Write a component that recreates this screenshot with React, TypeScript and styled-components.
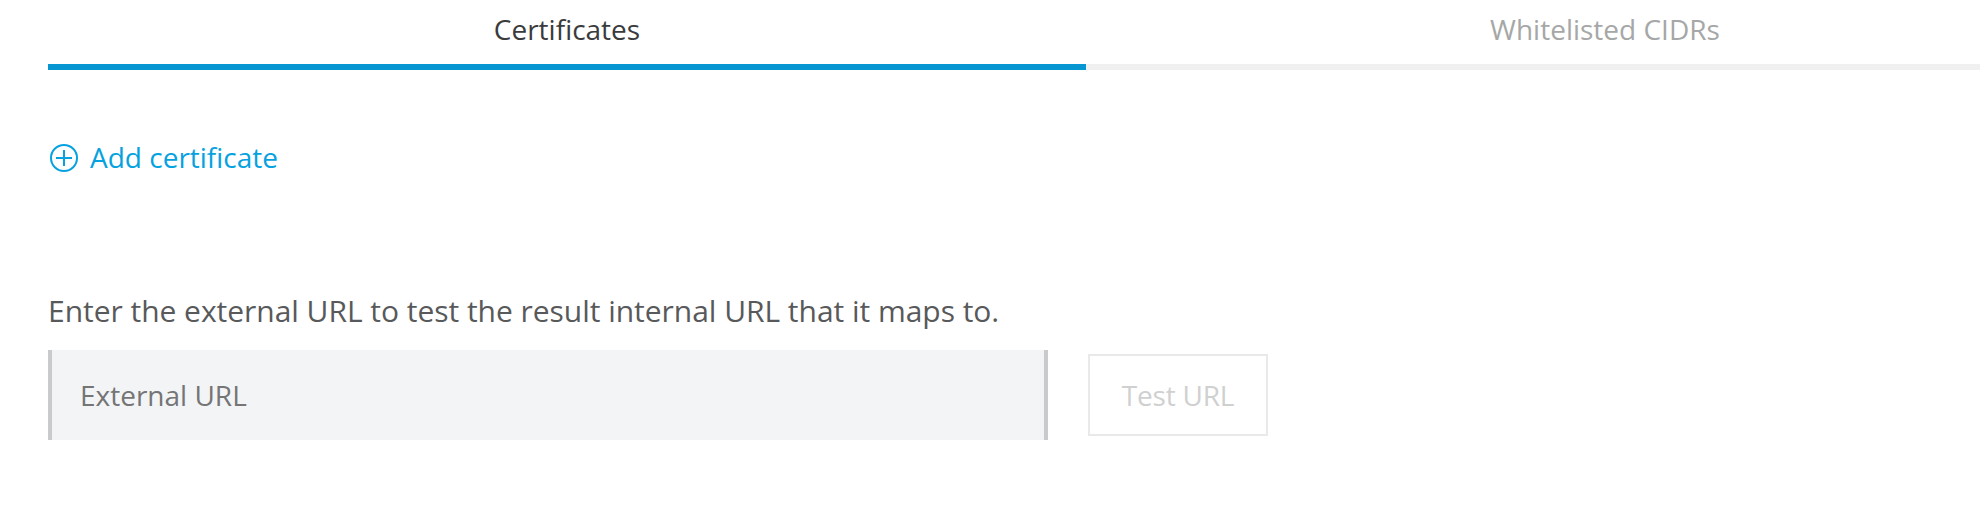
import React from 'react';
import styled, { createGlobalStyle } from 'styled-components';

const GlobalStyle = createGlobalStyle`
  * { box-sizing: border-box; }
  html, body { margin: 0; background: #fff; overflow: hidden; }
  body { font-family: "Open Sans", sans-serif; }
`;

const Page = styled.main`
  width: 1980px;
  height: 526px;
  padding-left: 48px;
  overflow: hidden;
`;

const Tabs = styled.nav`
  display: flex;
  width: 2076px;
`;

const Tab = styled.button<{ $active?: boolean }>`
  flex: 0 0 1038px;
  height: 70px;
  padding: 0 0 5px;
  border: 0;
  border-bottom: 6px solid ${(p) => (p.$active ? '#0696d1' : '#f0f0f0')};
  background: none;
  color: ${(p) => (p.$active ? '#3a3b3c' : '#a6a7a7')};
  font: 400 28px/59px "Open Sans", sans-serif;
`;

const AddLink = styled.button`
  display: flex;
  align-items: center;
  gap: 10px;
  margin: 68px 0 0;
  padding: 0;
  height: 40px;
  border: 0;
  background: none;
  color: #06a2df;
  font: 400 28px/38px "Open Sans", sans-serif;
`;

const AddLabel = styled.span`
  padding-bottom: 2px;
`;

const PlusIcon = styled.svg`
  width: 32px;
  height: 32px;
`;

const Prompt = styled.p`
  margin: 111px 0 0;
  height: 61px;
  color: #58595a;
  font-size: 30px;
  line-height: 44px;
  letter-spacing: -0.03px;
`;

const Form = styled.div`
  display: flex;
  align-items: center;
  gap: 40px;
`;

const UrlInput = styled.input`
  width: 1000px;
  height: 90px;
  padding: 0 28px;
  border: solid #c9cacb;
  border-width: 0 4px;
  border-radius: 0;
  background: #f3f4f6;
  font: 400 28px "Open Sans", sans-serif;
  &::placeholder { color: #757575; opacity: 1; }
`;

const TestButton = styled.button`
  width: 180px;
  height: 82px;
  padding: 0;
  border: 2px solid #e9e9e9;
  background: #fff;
  color: #cfd0d0;
  font: 400 28px "Open Sans", sans-serif;
  letter-spacing: -0.2px;
`;

export default function App() {
  return (
    <Page>
      <GlobalStyle />
      <Tabs>
        <Tab $active>Certificates</Tab>
        <Tab>Whitelisted CIDRs</Tab>
      </Tabs>
      <AddLink>
        <PlusIcon viewBox="0 0 32 32" fill="none" stroke="currentColor" strokeWidth="2">
          <circle cx="16" cy="16" r="13" />
          <path d="M16 8v16M8 16h16" />
        </PlusIcon>
        <AddLabel>Add certificate</AddLabel>
      </AddLink>
      <Prompt>Enter the external URL to test the result internal URL that it maps to.</Prompt>
      <Form>
        <UrlInput placeholder="External URL" />
        <TestButton disabled>Test URL</TestButton>
      </Form>
    </Page>
  );
}
